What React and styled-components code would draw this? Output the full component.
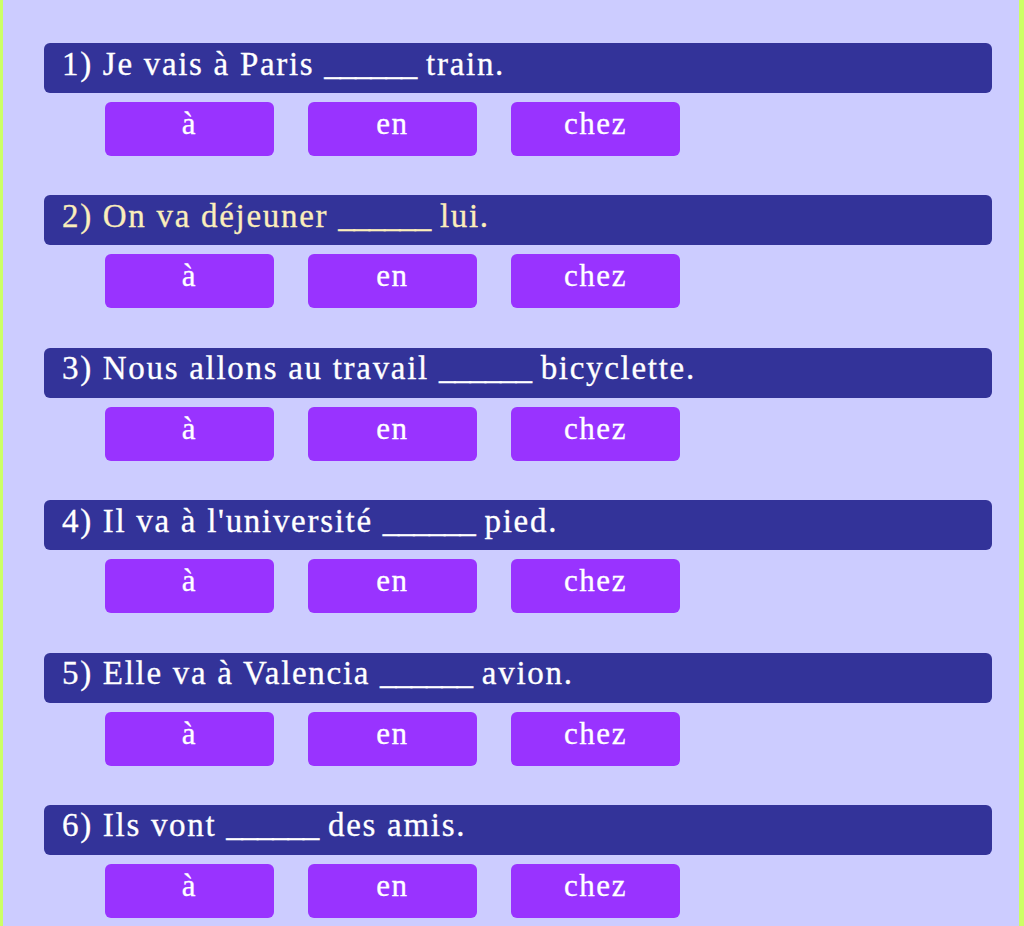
import React from 'react'
import styled, { createGlobalStyle } from 'styled-components'

const GlobalStyle = createGlobalStyle`
  html, body {
    margin: 0;
    padding: 0;
    background: #ccccff;
  }
`

const Page = styled.div`
  min-height: 926px;
  box-sizing: border-box;
  background-color: #ccccff;
  border-left: 3px solid #ccff66;
  border-right: 5px solid #ccff66;
  padding: 43px 27px 0 41px;
  font-family: "Liberation Serif", "Times New Roman", serif;
`

const Quiz = styled.div`
  display: flex;
  flex-direction: column;
  gap: 39.4px;
`

const Question = styled.div`
  display: flex;
  flex-direction: column;
  gap: 9px;
`

const Prompt = styled.div`
  height: 50px;
  box-sizing: border-box;
  display: flex;
  align-items: center;
  padding: 0 18px 8px;
  border-radius: 6px;
  background-color: #333399;
  color: ${props => props.$active ? '#fbeebb' : '#ffffff'};
  font-size: 33px;
  letter-spacing: 1.7px;
  white-space: pre;
  -webkit-text-stroke: 0.3px currentColor;
`

const Blank = styled.span`
  letter-spacing: -1.2px;
`

const Choices = styled.div`
  display: flex;
  gap: 34px;
  padding-left: 61px;
`

const Choice = styled.button`
  width: 169px;
  height: 54px;
  border: none;
  border-radius: 6px;
  background-color: #9933ff;
  color: #ffffff;
  font-family: "Liberation Serif", "Times New Roman", serif;
  font-size: 31px;
  letter-spacing: 1.6px;
  padding: 0 0 10px;
  cursor: pointer;
  -webkit-text-stroke: 0.3px currentColor;
`

const questions = [
  ['1) Je vais à Paris ', ' train.'],
  ['2) On va déjeuner ', ' lui.'],
  ['3) Nous allons au travail ', ' bicyclette.'],
  ["4) Il va à l'université ", ' pied.'],
  ['5) Elle va à Valencia ', ' avion.'],
  ['6) Ils vont ', ' des amis.']
]

const options = ['à', 'en', 'chez']

export default function App () {
  return (
    <Page>
      <GlobalStyle />
      <Quiz>
        {questions.map(([before, after], index) => (
          <Question key={index}>
            <Prompt $active={index === 1}>
              {before}<Blank>______</Blank>{after}
            </Prompt>
            <Choices>
              {options.map(option => (
                <Choice key={option}>{option}</Choice>
              ))}
            </Choices>
          </Question>
        ))}
      </Quiz>
    </Page>
  )
}
